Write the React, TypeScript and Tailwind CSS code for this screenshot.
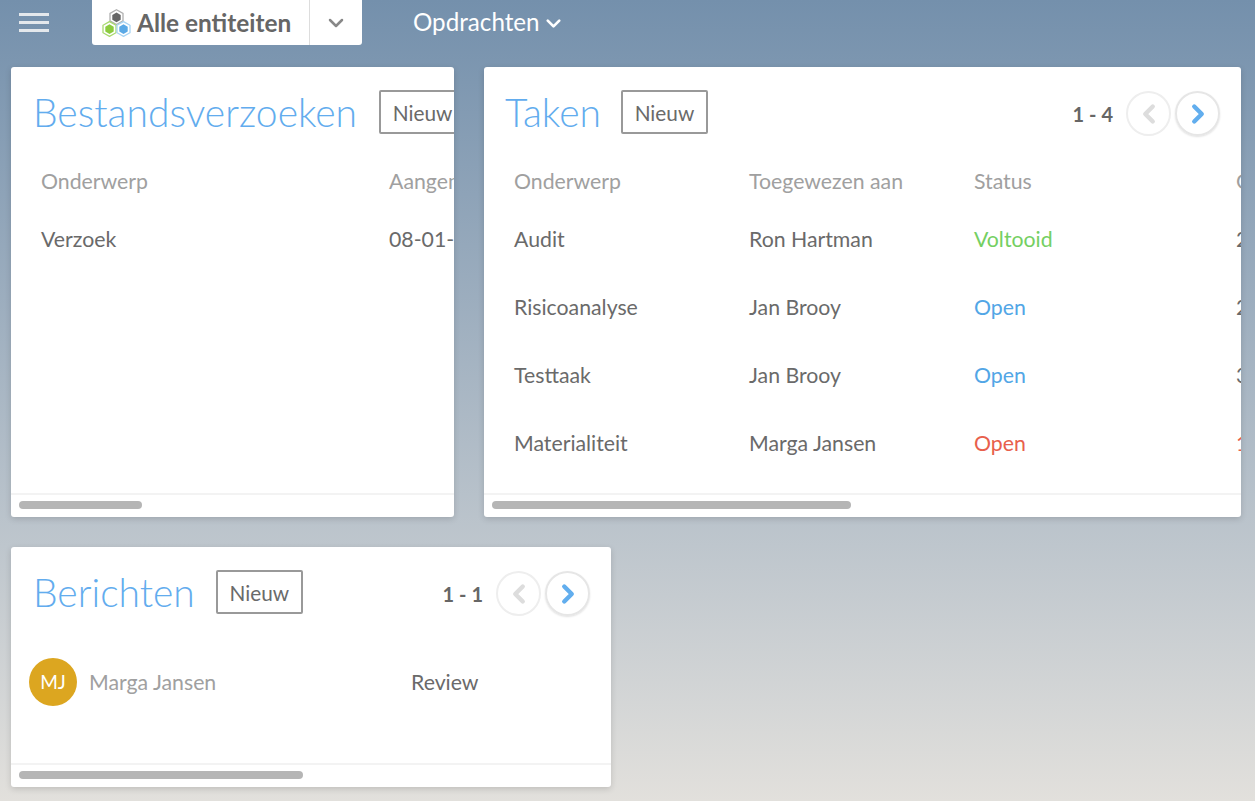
import { ChevronDown, ChevronLeft, ChevronRight } from 'lucide-react';

const tasks = [
  { subject: 'Audit', owner: 'Ron Hartman', status: 'Voltooid', statusColor: 'text-[#74cf62]', date: '21-01-2020', dateColor: 'text-[#6a6a6a]' },
  { subject: 'Risicoanalyse', owner: 'Jan Brooy', status: 'Open', statusColor: 'text-[#52a6e6]', date: '24-01-2020', dateColor: 'text-[#6a6a6a]' },
  { subject: 'Testtaak', owner: 'Jan Brooy', status: 'Open', statusColor: 'text-[#52a6e6]', date: '31-01-2020', dateColor: 'text-[#6a6a6a]' },
  { subject: 'Materialiteit', owner: 'Marga Jansen', status: 'Open', statusColor: 'text-[#e8604c]', date: '10-01-2020', dateColor: 'text-[#e8604c]' },
];

function Logo() {
  return (
    <svg width="29" height="28" viewBox="0 0 29 28" fill="none" className="shrink-0">
      <path d="M14.5.8 21 4.5v7.4l-6.5 3.7L8 11.9V4.5z" stroke="#b0b0b0" strokeWidth="1.3" />
      <path d="M14.5 3.4 18.7 5.9v4.8l-4.2 2.5-4.2-2.5V5.9z" fill="#666666" />
      <path d="M7.5 12.6 14 16.3v7.4l-6.5 3.7L1 23.7v-7.4z" stroke="#a9da70" strokeWidth="1.3" />
      <path d="M7.5 15.2 11.7 17.7v4.8l-4.2 2.5-4.2-2.5v-4.8z" fill="#8ccb3f" />
      <path d="M21.5 12.6 28 16.3v7.4l-6.5 3.7-6.5-3.7v-7.4z" stroke="#a8d4f3" strokeWidth="1.3" />
      <path d="M21.5 15.2 25.7 17.7v4.8l-4.2 2.5-4.2-2.5v-4.8z" fill="#5aa9e6" />
    </svg>
  );
}

function Header() {
  return (
    <header className="flex h-[45px] items-start">
      <div className="ml-[19px] mt-[13px] flex w-[30px] flex-col gap-[5px]">
        <div className="h-[3px] bg-[#e4e8ec]" />
        <div className="h-[3px] bg-[#e4e8ec]" />
        <div className="h-[3px] bg-[#e4e8ec]" />
      </div>
      <div className="ml-[43px] flex h-[45px] w-[270px] rounded-b-[3px] bg-white">
        <div className="flex w-[218px] items-center gap-[6px] border-r border-[#dddddd] pl-[10px]">
          <Logo />
          <span className="mt-[2px] text-[24.4px] font-bold leading-none text-[#666666]">Alle entiteiten</span>
        </div>
        <div className="flex flex-1 items-center justify-center">
          <ChevronDown className="h-[24px] w-[24px] text-[#888888]" strokeWidth={2.5} />
        </div>
      </div>
      <div className="ml-[51px] flex h-[45px] items-center gap-[2px] text-white">
        <span className="text-[24.2px] leading-none">Opdrachten</span>
        <ChevronDown className="mt-[1px] h-[23px] w-[23px]" strokeWidth={2.8} />
      </div>
    </header>
  );
}

function CardTitle({ title, gap }: { title: string; gap: string }) {
  return (
    <div className="flex shrink-0 items-start">
      <h2 className="whitespace-nowrap text-[39px] font-light leading-[44px] text-[#62acee]">{title}</h2>
      <button className={`${gap} flex h-[44px] w-[87px] shrink-0 items-center justify-center rounded-[2px] border-2 border-[#999999] pt-[1px] text-[20.8px] text-[#6a6a6a]`}>
        Nieuw
      </button>
    </div>
  );
}

function Pager({ label }: { label: string }) {
  return (
    <div className="flex items-center">
      <span className="mr-[13px] text-[20px] font-bold text-[#666666]">{label}</span>
      <div className="mr-[4px] flex h-[45px] w-[45px] items-center justify-center rounded-full border-2 border-[#eeeeee]">
        <ChevronLeft className="h-[30px] w-[30px] text-[#dddddd]" strokeWidth={3.5} />
      </div>
      <div className="flex h-[45px] w-[45px] items-center justify-center rounded-full border-2 border-[#e6e6e6] shadow-[0_1px_2px_rgba(0,0,0,0.12)]">
        <ChevronRight className="h-[30px] w-[30px] text-[#62aeee]" strokeWidth={3.5} />
      </div>
    </div>
  );
}

function Scrollbar({ thumb }: { thumb: string }) {
  return (
    <div className="h-[24px] shrink-0 border-t-2 border-[#f3f3f3] pl-[8px] pt-[6px]">
      <div className={`h-[8px] rounded-full bg-[#b5b5b5] ${thumb}`} />
    </div>
  );
}

export default function App() {
  return (
    <div className="flex h-[801px] flex-col overflow-hidden bg-gradient-to-b from-[#7490ac] to-[#e2e0dc] font-['Lato',sans-serif]">
      <Header />
      <div className="flex flex-col gap-[30px] pl-[11px] pt-[22px]">
        <div className="flex gap-[30px]">
          <section className="flex h-[450px] w-[443px] flex-col overflow-hidden rounded-[3px] bg-white shadow-[0_2px_6px_rgba(0,0,0,0.15)]">
            <div className="min-h-0 flex-1 overflow-hidden">
              <div className="w-[1300px] pl-[22px] pt-[23px]">
                <CardTitle title="Bestandsverzoeken" gap="ml-[22px]" />
                <div className="mt-[33px] grid grid-cols-[348px_1fr] pl-[8px] text-[21.28px] leading-[28px]">
                  <div className="text-[#a0a0a0]">Onderwerp</div>
                  <div className="text-[#a0a0a0]">Aangemaakt op</div>
                  <div className="mt-[30px] text-[#6a6a6a]">Verzoek</div>
                  <div className="mt-[30px] text-[#6a6a6a]">08-01-2020</div>
                </div>
              </div>
            </div>
            <Scrollbar thumb="w-[123px]" />
          </section>

          <section className="flex h-[450px] w-[757px] flex-col overflow-hidden rounded-[3px] bg-white shadow-[0_2px_6px_rgba(0,0,0,0.15)]">
            <div className="min-h-0 flex-1 overflow-hidden">
              <div className="pt-[23px]">
                <div className="flex items-start justify-between pl-[21px] pr-[21px]">
                  <CardTitle title="Taken" gap="ml-[20px]" />
                  <div className="mt-[1px]">
                    <Pager label="1 - 4" />
                  </div>
                </div>
                <div className="mt-[31px] grid w-[1000px] grid-cols-[235px_225px_262px_1fr] pl-[30px] text-[21.28px] leading-[28px]">
                  <div className="text-[#a0a0a0]">Onderwerp</div>
                  <div className="text-[#a0a0a0]">Toegewezen aan</div>
                  <div className="text-[#a0a0a0]">Status</div>
                  <div className="text-[#a0a0a0]">Gepland</div>
                  {tasks.map((t, i) => (
                    <div key={t.subject} className={`col-span-4 grid grid-cols-subgrid ${i === 0 ? 'mt-[30px]' : 'mt-[40px]'}`}>
                      <div className="text-[#6a6a6a]">{t.subject}</div>
                      <div className="text-[#6a6a6a]">{t.owner}</div>
                      <div className={t.statusColor}>{t.status}</div>
                      <div className={t.dateColor}>{t.date}</div>
                    </div>
                  ))}
                </div>
              </div>
            </div>
            <Scrollbar thumb="w-[359px]" />
          </section>
        </div>

        <section className="flex h-[240px] w-[600px] flex-col overflow-hidden rounded-[3px] bg-white shadow-[0_2px_6px_rgba(0,0,0,0.15)]">
          <div className="min-h-0 flex-1 overflow-hidden pt-[23px]">
            <div className="flex items-start justify-between pl-[22px] pr-[21px]">
              <CardTitle title="Berichten" gap="ml-[21px]" />
              <div className="mt-[1px]">
                <Pager label="1 - 1" />
              </div>
            </div>
            <div className="mt-[42px] flex items-center pl-[18px] text-[21.28px] leading-[28px]">
              <div className="flex h-[48px] w-[48px] shrink-0 items-center justify-center rounded-full bg-[#dca620] text-[19px] text-white">
                MJ
              </div>
              <span className="ml-[12px] w-[322px] text-[#a0a0a0]">Marga Jansen</span>
              <span className="text-[#6a6a6a]">Review</span>
            </div>
          </div>
          <Scrollbar thumb="w-[284px]" />
        </section>
      </div>
    </div>
  );
}
